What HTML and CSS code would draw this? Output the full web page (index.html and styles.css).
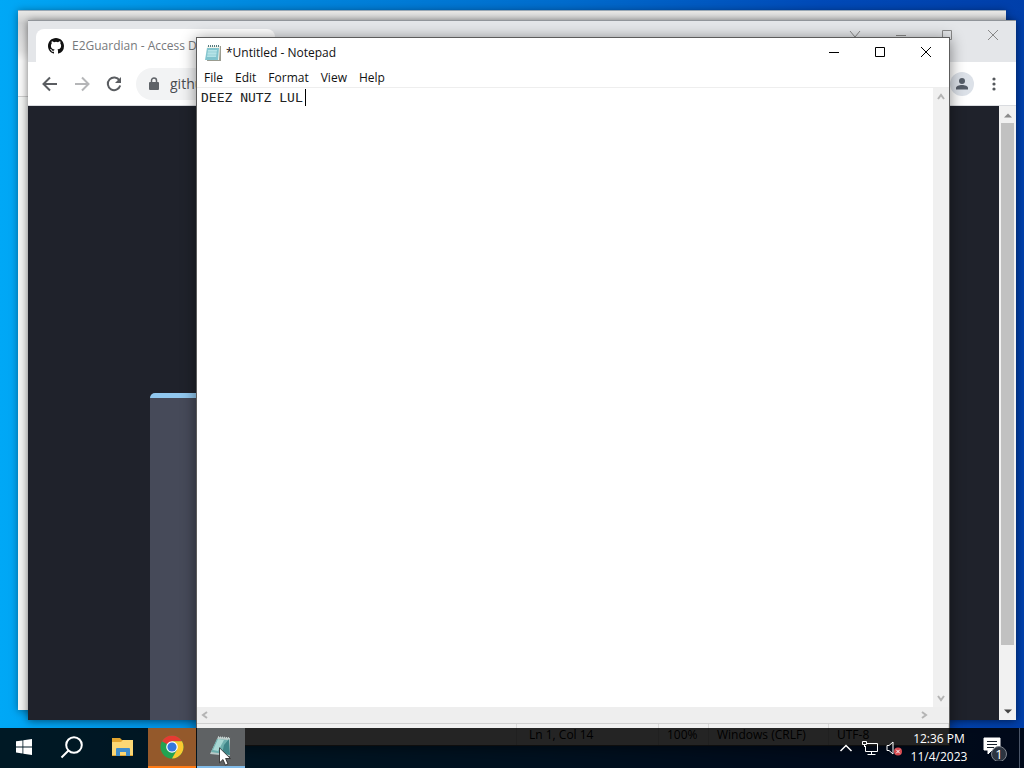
FILE: index.html
```html
<!DOCTYPE html>
<html lang="en">
<head>
<meta charset="utf-8">
<title>Desktop</title>
<link rel="stylesheet" href="styles.css">
</head>
<body>
<main class="desktop">
  <section class="window window-back" aria-label="Background window"><div class="back-caption"></div></section>

  <section class="window browser" aria-label="Browser">
    <header class="tabstrip">
      <div class="tab">
        <svg class="tab-icon" viewBox="0 0 16 16"><path fill="#111" d="M8 0C3.58 0 0 3.58 0 8c0 3.54 2.29 6.53 5.47 7.59.4.07.55-.17.55-.38 0-.19-.01-.82-.01-1.49-2.01.37-2.53-.49-2.69-.94-.09-.23-.48-.94-.82-1.13-.28-.15-.68-.52-.01-.53.63-.01 1.08.58 1.23.82.72 1.21 1.87.87 2.33.66.07-.52.28-.87.51-1.07-1.78-.2-3.64-.89-3.64-3.95 0-.87.31-1.59.82-2.15-.08-.2-.36-1.02.08-2.12 0 0 .67-.21 2.2.82a7.6 7.6 0 0 1 4 0c1.53-1.04 2.2-.82 2.2-.82.44 1.1.16 1.92.08 2.12.51.56.82 1.27.82 2.15 0 3.07-1.87 3.75-3.65 3.95.29.25.54.73.54 1.48 0 1.07-.01 1.93-.01 2.2 0 .21.15.46.55.38A8.01 8.01 0 0 0 16 8c0-4.42-3.58-8-8-8z"/></svg>
        <span>E2Guardian - Access Denied</span>
      </div>
      <div class="browser-controls">
        <button type="button" aria-label="Search tabs"><svg viewBox="0 0 12 12"><path d="M1 2l5 6 5-6"/></svg></button>
        <button type="button" aria-label="Minimize browser"><svg viewBox="0 0 12 12"><path d="M1 6.500h10"/></svg></button>
        <button type="button" aria-label="Maximize browser"><svg viewBox="0 0 12 12"><path d="M1.500 1.500h9v9h-9z"/></svg></button>
        <button type="button" aria-label="Close browser"><svg viewBox="0 0 12 12"><path d="M1 1l10 10M11 1L1 11"/></svg></button>
      </div>
    </header>
    <div class="toolbar">
      <button type="button" aria-label="Back"><svg viewBox="0 0 16 16"><path stroke="#5a5d61" d="M15 8H2M8 1.500L1.500 8 8 14.500"/></svg></button>
      <button type="button" aria-label="Forward"><svg viewBox="0 0 16 16"><path stroke="#b5b6b8" d="M1 8h13M8 1.500L14.500 8 8 14.500"/></svg></button>
      <button type="button" aria-label="Reload"><svg viewBox="0 0 16 16"><path stroke="#5a5d61" d="M13.500 4.500A6.300 6.300 0 1 0 14.200 9.500"/><path fill="#5a5d61" d="M15 1v6H9z"/></svg></button>
      <label class="address">
        <svg viewBox="0 0 10 14" aria-hidden="true"><path fill="#5f6368" d="M1 5h8q1 0 1 1v6q0 1-1 1H1q-1 0-1-1V6q0-1 1-1z"/><path fill="none" stroke="#5f6368" stroke-width="1.500" d="M2.500 6V3.500a2.500 2.500 0 0 1 5 0V6"/></svg>
        <input type="text" value="github.com" aria-label="Address">
      </label>
      <button class="profile" type="button" aria-label="Profile"><svg viewBox="0 0 16 16"><circle cx="8" cy="5" r="3" fill="#555d68"/><path fill="#555d68" d="M2 13.500v-1.500c0-4 12-4 12 0v1.500z"/></svg></button>
      <button type="button" aria-label="Browser menu"><svg viewBox="0 0 16 16" fill="#55585c"><circle cx="8" cy="3" r="1.600"/><circle cx="8" cy="8" r="1.600"/><circle cx="8" cy="13" r="1.600"/></svg></button>
    </div>
    <div class="page">
      <div class="page-body"><div class="page-card"></div></div>
      <div class="scrollbar">
        <svg viewBox="0 0 16 16"><path fill="#8a8a8a" d="M4 11l4-4 4 4z"/></svg>
        <div class="scroll-thumb"></div>
        <svg viewBox="0 0 16 16"><path fill="#444" d="M4 6l4 4 4-4z"/></svg>
      </div>
    </div>
  </section>

  <section class="window notepad" aria-label="Notepad">
    <header class="titlebar">
      <svg class="notepad-icon" viewBox="0 0 16 18"><use href="#note"/></svg>
      <h1>*Untitled - Notepad</h1>
      <div class="controls">
        <button type="button" aria-label="Minimize"><svg viewBox="0 0 12 12"><path d="M1 5.500h10"/></svg></button>
        <button type="button" aria-label="Maximize"><svg viewBox="0 0 12 12"><path d="M1.500 .5h9v9h-9z"/></svg></button>
        <button type="button" aria-label="Close"><svg viewBox="0 0 12 12"><path d="M1 0l10 10M11 0L1 10"/></svg></button>
      </div>
    </header>
    <nav class="menubar">
      <button type="button">File</button><button type="button">Edit</button><button type="button">Format</button><button type="button">View</button><button type="button">Help</button>
    </nav>
    <div class="editor">
      <div class="editor-text"><textarea aria-label="Text editor" spellcheck="false">DEEZ NUTZ LUL</textarea><span class="caret"></span></div>
      <div class="scroll-v">
        <svg viewBox="0 0 10 10"><path d="M2 7l3-4 3 4"/></svg>
        <svg viewBox="0 0 10 10"><path d="M2 3l3 4 3-4"/></svg>
      </div>
    </div>
    <div class="scroll-h">
      <svg viewBox="0 0 10 10"><path d="M7 2L3 5l4 3"/></svg>
      <svg viewBox="0 0 10 10"><path d="M3 2l4 3-4 3"/></svg>
    </div>
    <footer class="statusbar"><span></span><span>Ln 1, Col 14</span><span>100%</span><span>Windows (CRLF)</span><span>UTF-8</span></footer>
  </section>

  <footer class="taskbar">
    <button class="task" type="button" aria-label="Start"><svg viewBox="0 0 16 16"><path fill="#fff" d="M0 2.300l6.500-.9v6.100H0zM7.300 1.300L16 0v7.500H7.300zM0 8.400h6.500v6.100L0 13.600zM7.300 8.400H16V16l-8.700-1.300z"/></svg></button>
    <button class="task" type="button" aria-label="Search"><svg class="icon-large" viewBox="0 0 24 24"><circle cx="14" cy="10" r="7.800" fill="none" stroke="#fff" stroke-width="2"/><path stroke="#fff" stroke-width="2" d="M8.500 15.500L1.500 22.500"/></svg></button>
    <button class="task task-wide" type="button" aria-label="File Explorer"><svg class="icon-large" viewBox="0 0 24 24"><path fill="#e2a52f" d="M2 3h8l2 2h11v16H2z"/><path fill="#fbd774" d="M2 7h9l2-2h10v15H2z"/><path fill="#3f8dcc" d="M6 14q0-1 1-1h12q1 0 1 1v7h-4v-4h-6v4H6z"/></svg></button>
    <button class="task task-chrome" type="button" aria-label="Chrome"><svg class="icon-large" viewBox="0 0 24 24"><circle cx="12" cy="12" r="11.500" fill="#22a251"/><path fill="#e53b32" d="M12 12L2 6.300A11.500 11.500 0 0 1 22 6.300H12z"/><path fill="#fcca30" d="M12 6.300h10A11.500 11.500 0 0 1 12 23.500l5-8.700z"/><circle cx="12" cy="12" r="5.800" fill="#fff"/><circle cx="12" cy="12" r="4.600" fill="#3478dd"/></svg></button>
    <button class="task task-note" type="button" aria-label="Notepad">
      <svg class="icon-large" viewBox="0 0 24 24"><path fill="#b9c9c7" d="M9 2l12 1v18l-20-2z"/><path fill="#6fb0ae" d="M8 4l11 1-4 14-13-2z"/><path fill="#a9d8d4" d="M9 4l6 1-6 11-5-1z"/><path fill="#3f8588" d="M15 10l5-6 1 16-8-1z"/><path stroke="#c9d6d4" stroke-dasharray="1 1" stroke-width="1.500" d="M9 2l12 1"/></svg>
    </button>
    <div class="tray">
      <button type="button" aria-label="Show hidden icons"><svg viewBox="0 0 16 16"><path stroke-width="1.500" d="M2.500 11L8 5.500l5.500 5.500"/></svg></button>
      <button type="button" aria-label="Network"><svg viewBox="0 0 16 16"><path d="M4 3.500h11.500v8H3.500V6M9.500 12v3M5.500 14.500h8M.5 1.500h4v3h-4zM2.500 4.500V7"/></svg></button>
      <button type="button" aria-label="Volume"><svg viewBox="0 0 16 16"><path d="M1 5.500h2L7 2v12L3 10.500H1z"/><circle cx="12" cy="11.500" r="4" fill="#d84a50" stroke="none"/><path d="M10.200 9.700l3.600 3.600M13.800 9.700l-3.600 3.600"/></svg></button>
      <time class="clock"><span>12:36 PM</span><span>11/4/2023</span></time>
      <button class="notifications" type="button" aria-label="1 notification"><svg viewBox="0 0 26 26"><path fill="#fff" d="M1 3h16v12H9l-4 4v-4H1z"/><path stroke="#17202b" d="M4 6.500h10M4 9.500h10M4 12.500h7"/><circle cx="16" cy="19" r="7.500" fill="#2c3440" stroke="#7f858e"/><text x="16" y="24" text-anchor="middle" fill="#fff">1</text></svg></button>
      <button class="show-desktop" type="button" aria-label="Show desktop"></button>
    </div>
  </footer>
  <svg class="pointer" viewBox="0 0 12 19"><path fill="#fff" stroke="#222" stroke-width=".8" d="M.5.8v15l3.500-3.300 2.400 5.600 2.600-1.100-2.400-5.500h4.800z"/></svg>
</main>
<svg class="symbols" aria-hidden="true"><symbol id="note" viewBox="0 0 16 18"><path fill="#9b9c90" d="M3 2h13v15H2z"/><path fill="#f1f3eb" d="M2 2h13l-1 14H1z"/><path fill="#83c5cf" d="M2 4h12l-1 12H0z"/><path fill="#b5e3e7" d="M3 6h9l-1 7H2z"/><path stroke="#55797f" stroke-dasharray="1 1" stroke-width="2" d="M3 2h11"/><path stroke="#7cbcc5" d="M2 8h11M2 11h11M1 14h11" stroke-width=".5"/></symbol></svg>
</body>
</html>
```

FILE: styles.css
```css
* { box-sizing: border-box; }
body { margin: 0; font-family: "Open Sans", "Noto Sans", sans-serif; font-size: 12px; color: #111; }
button { border: 0; padding: 0; background: none; color: inherit; font: inherit; display: flex; align-items: center; justify-content: center; }
svg { display: block; flex: none; }
.symbols { position: absolute; width: 0; height: 0; }

.desktop { position: relative; height: 100vh; overflow: hidden; display: flex; flex-direction: column; justify-content: flex-end; background: linear-gradient(90deg, #00a8f6 0, #0089df 25%, #006ccd 55%, #004ab8 80%, #003faa 100%); }
.window { position: absolute; display: flex; flex-direction: column; }
.window-back { inset: 10px 18px 58px 18px; background: #f2f4f3; border-top: 1px solid #99a8b5; box-shadow: 0 1px 8px #0006; }
.back-caption { height: 86px; background: linear-gradient(#e8e8e6 0, #d0d1d2 12px, #e4e4e4 40px, #f8f8f8 50px); border-bottom: 1px solid #ccc; }

.browser { inset: 20px 8px 48px 28px; background: #fff; border-top: 1px solid #91959a; box-shadow: 0 1px 8px #0008; }
.tabstrip { height: 41px; display: flex; align-items: flex-end; justify-content: space-between; padding-left: 8px; background: #e4e6e9; }
.tab { width: 239px; height: 33px; display: flex; align-items: center; gap: 8px; padding: 0 12px; border-radius: 8px 8px 0 0; background: #fff; color: #76797c; overflow: hidden; white-space: nowrap; }
.tab-icon { width: 16px; height: 16px; }
.browser-controls { display: flex; align-self: flex-start; }
.browser-controls button { width: 46px; height: 28px; }
.browser-controls svg, .controls svg { width: 12px; height: 12px; fill: none; stroke: #888; }
.toolbar { height: 44px; display: flex; align-items: center; gap: 8px; padding: 0 10px; border-bottom: 1px solid #dadce0; }
.toolbar button { width: 24px; height: 24px; }
.toolbar button svg { width: 16px; height: 16px; stroke-width: 2; }
.toolbar button path[stroke] { fill: none; }
.address { flex: 1; min-width: 0; height: 32px; margin-left: 2px; margin-right: 16px; padding-left: 13px; display: flex; align-items: center; gap: 11px; border-radius: 16px; background: #f2f3f4; }
.address svg { width: 10px; height: 14px; }
.address input { flex: 1; min-width: 0; border: 0; padding: 0; background: none; color: #4a4d51; font: inherit; font-size: 14px; outline: 0; }
.toolbar .profile { border-radius: 50%; background: #dce1e8; }
.page { flex: 1; min-height: 0; display: flex; background: #1f222b; }
.page-body { flex: 1; display: flex; padding: 287px 122px 0; }
.page-card { flex: 1; border-top: 5px solid #91c8ef; border-radius: 5px 5px 0 0; background: #464a59; }
.scrollbar { width: 17px; display: flex; flex-direction: column; align-items: center; background: #f1f1f1; }
.scrollbar svg { width: 16px; height: 17px; }
.scroll-thumb { flex: 1; width: 13px; margin-bottom: 58px; background: #c1c1c1; }

.notepad { inset: 37px 74px 22px 196px; background: #fff; border: 1px solid #5c5c5c; box-shadow: 0 2px 14px #0007; }
.titlebar { height: 29px; display: flex; align-items: center; padding-left: 8px; gap: 5px; }
.titlebar h1 { flex: 1; margin: 0; font-size: 12px; font-weight: 400; }
.notepad-icon { width: 16px; height: 18px; }
.controls { display: flex; }
.controls button { width: 46px; height: 29px; }
.controls svg { stroke: #000; }
.menubar { height: 21px; display: flex; gap: 12px; padding: 0 7px; border-bottom: 1px solid #eee; }
.editor { flex: 1; min-height: 0; display: flex; }
.editor-text { position: relative; flex: 1; display: flex; }
.editor textarea { flex: 1; width: 100%; border: 0; outline: 0; resize: none; padding: 2px 4px; background: #fff; color: #222; font: 13px/16px "DejaVu Sans Mono", monospace; caret-color: transparent; }
.caret { position: absolute; left: 108px; top: 1px; width: 1px; height: 17px; background: #000; }
.scroll-v { width: 16px; display: flex; flex-direction: column; justify-content: space-between; align-items: center; padding: 4px 0; background: #f0f0f0; }
.scroll-h { height: 16px; display: flex; justify-content: space-between; align-items: center; padding: 0 20px 0 3px; background: #eee; }
.scroll-v svg, .scroll-h svg { width: 10px; height: 10px; fill: none; stroke: #b4b4b4; stroke-width: 2; }
.statusbar { height: 22px; display: grid; grid-template-columns: 1fr 142px 50px 120px 120px; align-items: center; border-top: 1px solid #d0d0d0; background: #f0f0f0; }
.statusbar span { height: 100%; display: flex; align-items: center; padding-left: 8px; border-right: 1px solid #d8d8d8; color: #000; }
.statusbar span:nth-child(2) { padding-left: 12px; }

.taskbar { position: relative; height: 40px; display: flex; background: #000000d9; color: #fff; }
.task { width: 48px; height: 40px; border-bottom: 2px solid transparent; }
.task svg { width: 16px; height: 16px; }
.task .icon-large { width: 24px; height: 24px; }
.task-wide { width: 52px; }
.task-chrome { background: #94592b; border-color: #ff7b16; }
.task-note { margin-left: 1px; background: #5f6264; border-color: #82bce9; }
.tray { margin-left: auto; display: flex; align-items: center; }
.tray button { width: 24px; height: 40px; }
.tray svg { width: 16px; height: 16px; fill: none; stroke: #fff; stroke-width: 1; }
.clock { width: 66px; display: flex; flex-direction: column; align-items: center; line-height: 18px; }
.tray .notifications { width: 47px; }
.tray .notifications svg { width: 26px; height: 26px; }
.notifications text { font-size: 13px; stroke: none; }
.tray .show-desktop { width: 5px; border-left: 1px solid #4a5568; }
.pointer { position: absolute; left: 219px; bottom: 2px; width: 12px; height: 19px; }
```
